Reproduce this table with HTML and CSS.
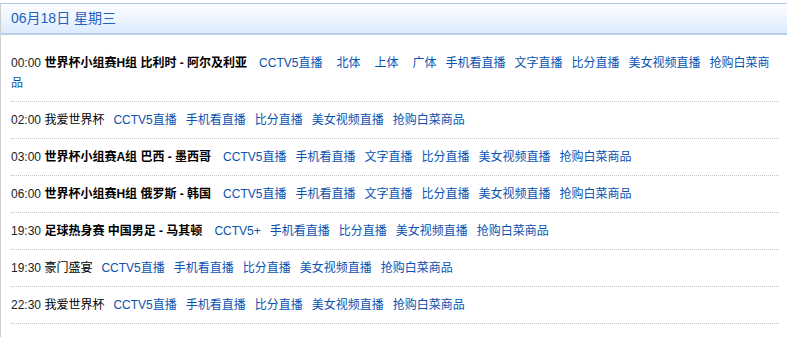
FILE: index.html
```html
<!DOCTYPE html>
<html lang="zh-CN">
<head>
<meta charset="utf-8">
<title>06月18日 星期三</title>
<link rel="stylesheet" href="styles.css">
</head>
<body>
<div class="box">
  <div class="hd">06月18日 星期三</div>
  <ul class="list">
    <li class="row"><span class="time">00:00</span> <b class="title">世界杯小组赛H组 比利时 - 阿尔及利亚</b><a class="lk">CCTV5直播</a><a class="lk wide">北体</a><a class="lk wide">上体</a><a class="lk wide">广体</a><a class="lk">手机看直播</a><a class="lk">文字直播</a><a class="lk">比分直播</a><a class="lk">美女视频直播</a><a class="lk">抢购白菜商品</a></li>
    <li class="row"><span class="time">02:00</span> <span class="title">我爱世界杯</span><a class="lk">CCTV5直播</a><a class="lk">手机看直播</a><a class="lk">比分直播</a><a class="lk">美女视频直播</a><a class="lk">抢购白菜商品</a></li>
    <li class="row"><span class="time">03:00</span> <b class="title">世界杯小组赛A组 巴西 - 墨西哥</b><a class="lk">CCTV5直播</a><a class="lk">手机看直播</a><a class="lk">文字直播</a><a class="lk">比分直播</a><a class="lk">美女视频直播</a><a class="lk">抢购白菜商品</a></li>
    <li class="row"><span class="time">06:00</span> <b class="title">世界杯小组赛H组 俄罗斯 - 韩国</b><a class="lk">CCTV5直播</a><a class="lk">手机看直播</a><a class="lk">文字直播</a><a class="lk">比分直播</a><a class="lk">美女视频直播</a><a class="lk">抢购白菜商品</a></li>
    <li class="row"><span class="time">19:30</span> <b class="title">足球热身赛 中国男足 - 马其顿</b><a class="lk">CCTV5+</a><a class="lk">手机看直播</a><a class="lk">比分直播</a><a class="lk">美女视频直播</a><a class="lk">抢购白菜商品</a></li>
    <li class="row"><span class="time">19:30</span> <span class="title">豪门盛宴</span><a class="lk">CCTV5直播</a><a class="lk">手机看直播</a><a class="lk">比分直播</a><a class="lk">美女视频直播</a><a class="lk">抢购白菜商品</a></li>
    <li class="row"><span class="time">22:30</span> <span class="title">我爱世界杯</span><a class="lk">CCTV5直播</a><a class="lk">手机看直播</a><a class="lk">比分直播</a><a class="lk">美女视频直播</a><a class="lk">抢购白菜商品</a></li>
  </ul>
</div>
</body>
</html>
```
FILE: styles.css
```css
html, body {
  margin: 0;
  padding: 0;
  background: #fff;
  overflow: hidden;
}
body {
  font-family: "Liberation Sans", "Noto Sans CJK SC", sans-serif;
  font-size: 12px;
  color: #000;
}
.box {
  margin-top: 3px;
  border-left: 1px solid #cfcfcf;
  min-height: 340px;
}
.hd {
  height: 29px;
  line-height: 29px;
  padding-left: 10px;
  border-top: 1px solid #a9c8e6;
  border-bottom: 2px solid #b7d0ea;
  background: linear-gradient(to bottom, #fbfdff 0%, #eef5ff 50%, #dcebff 100%);
  color: #2262be;
  font-size: 14px;
}
.list {
  list-style: none;
  margin: 0;
  padding: 10px 8px 0 10px;
}
.row {
  padding: 8px 0;
  line-height: 20px;
  border-bottom: 1px dotted #c4c4c4;
}
.time {
  color: #222;
}
.title {
  color: #000;
}
b.title {
  font-weight: bold;
  margin-right: 3px;
}
.lk {
  color: #0a52b0;
  margin-left: 9px;
  text-decoration: none;
}
.lk.wide {
  margin-left: 14px;
}
```
